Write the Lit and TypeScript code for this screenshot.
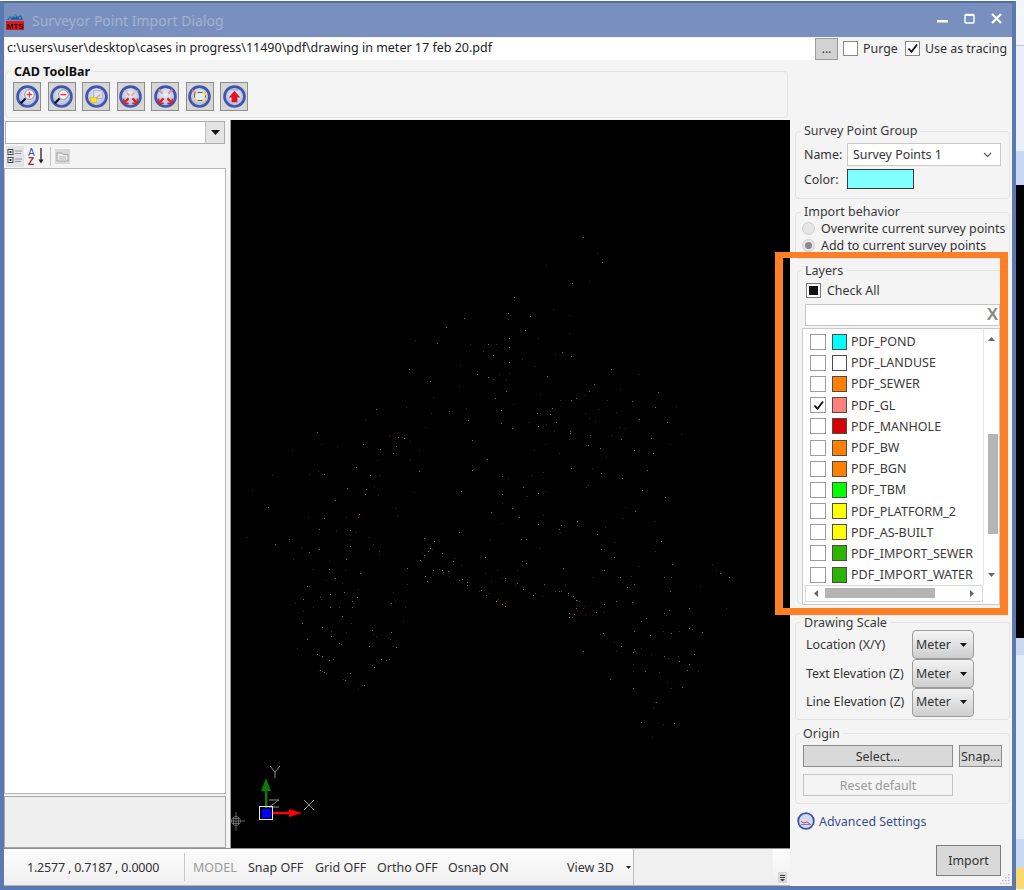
import { LitElement, html, css, svg } from "lit";
import { customElement } from "lit/decorators.js";

const D1 = "702,293 835,298 649,322 556,359 622,370 721,373 774,373 798,373 838,380 759,394 790,405 689,434 537,447 838,458 740,463 808,463 774,471 790,477 601,482 686,497 828,514 608,530 795,535 529,562 438,567 707,564 657,572 604,580 715,599 404,601 814,609 585,622 261,636 476,644 505,650 516,652 523,655 540,662 726,660 274,671 399,671 322,679 497,679 186,689 449,687 566,689 489,700 540,718 771,716 441,721 378,740 729,746 726,751 263,753 566,753 237,761 282,761 127,764 420,766 447,764 351,803 433,798 407,806 66,809 694,814 553,817 404,822 444,825 816,823";
const D2 = "316,31 494,55 114,52 502,76 782,65 234,82 282,84 348,82 388,73 383,80 385,82 816,100 268,118 319,124 361,121 378,127 686,127 50,142 178,148 415,142 582,145 361,151 612,153 779,148 135,163 428,161 359,169 212,175 266,177 417,177 601,173 606,177 594,182 447,183 237,187 577,190 636,190 447,193 582,196 188,207 348,207 675,203 766,201 298,212 569,211 574,214 670,214 694,225 532,233 247,236 298,236 346,241 609,241 626,236 636,241 638,246 654,243 800,241 391,249 766,249 585,257 657,257 316,265 287,270 590,272 686,270 697,266 782,272 710,275 335,278 232,289 532,283 712,286 385,297 343,305 489,305 752,299 747,302 300,313 773,310 769,315 271,321 380,321 274,326 220,326 803,326 367,334 494,334 798,334 196,339 484,339 825,339 816,342 250,350 300,350 327,350 367,352 526,352 825,347 220,363 335,377 519,393 215,400 364,398 277,411 303,422 425,420 348,427 484,427 428,433 303,437 438,438 231,448 481,448 327,459 332,462 417,469 489,469 497,472 202,475 261,491 268,496 277,499 292,506 298,510 308,507 454,507 467,510 476,507 425,526 433,531 263,541 271,539 277,544 282,547 287,549 359,549 338,568 346,571 354,578 401,586 383,597";
const D3 = "248,52 291,100 307,127 137,134 217,189 267,182 41,231 160,266 25,278 30,285 91,288 208,284 75,330 206,340 28,355 113,355 187,395 166,402 214,407 65,417 28,427 104,437 333,447 418,462 142,469 17,480 283,492 360,507 267,512 121,522 474,517 256,526 227,535 180,539 214,541 321,541 395,544 39,553 464,561 527,559 155,564 296,566 4,569 349,576 110,578 256,578 150,583 267,593 418,596 84,606 169,606 286,603 501,606 139,611 115,617 357,621 36,623 376,625 211,632 163,634 211,639 544,643 270,646 333,646 453,653 208,658 363,658 134,673 263,676 509,673 299,685 102,690 403,690 177,698 459,698 318,710 214,743 275,743 442,750 129,755 304,758 94,764 6,767 25,774 366,775 264,795 70,800 259,800 427,810 134,812 115,820 81,827 495,830 6,849 36,864 376,862 405,874 129,884 57,891 370,894 232,904 466,904 115,911 230,914 182,916 315,921 177,926 180,936 291,943 62,956 78,956 344,966 482,963 118,984 304,988 464,992 341,1011 65,1023 78,1030 418,1038 517,1033 637,1033 190,1045 52,1050 312,1050 647,1050 661,1058 275,1070 360,1070 392,1068 493,1070 512,1072 687,1070 6,1075 14,1073 14,1080 52,1090 46,1095 131,1093 195,1095 401,1093 600,1097 381,1100 70,1100 70,1107 166,1112 177,1112 184,1114 509,1112 104,1120 203,1120 205,1124 99,1124 126,1129 219,1129 222,1134 228,1141 238,1144 349,1144 232,1141 395,1147 232,1157 312,1152 253,1157 227,1164 248,1164 568,1164 677,1164 506,1171 232,1170 208,1180 217,1182 222,1182 256,1182 289,1177 312,1177 493,1180 499,1184 206,1190 217,1192 437,1194 424,1202 403,1232 488,1234 513,1239 538,1234 568,1224 576,1226 607,1236 299,1241 310,1239 312,1244 451,1244 341,1266 363,1278 424,1283 403,1288 405,1292 248,1293 347,1293 400,1296 453,1303 493,1308 533,1308 581,1301 503,1313 538,1323 400,1331 568,1333 400,1353 435,1353 477,1355 560,1351 594,1353 331,1376 501,1385 400,1403 512,1403 546,1401 464,1445 469,1445 459,1462 424,1507 490,1512 522,1509 456,1552";

function dotPaths(): [string, string] {
  let bright = "";
  let dim = "";
  const add = (s: string, ox: number, oy: number) => {
    s.split(" ").forEach((p, i) => {
      const [a, b] = p.split(",").map(Number);
      const x = Math.round(a / 3 + ox);
      const y = Math.round(b / 3 + oy);
      const d = `M${x} ${y}h1v1h-1z`;
      if (i % 2 === 0) bright += d;
      else dim += d;
    });
  };
  add(D1, 230, 220);
  add(D2, 230, 490);
  add(D3, 500, 220);
  return [bright, dim];
}
const [BRIGHT, DIM] = dotPaths();

const ring = (inner: unknown) => html`<svg width="23" height="23" viewBox="0 0 24 24">
  <defs><radialGradient id="rg" cx="50%" cy="40%" r="60%"><stop offset="0" stop-color="#eef0f9"/><stop offset="1" stop-color="#aab6de"/></radialGradient></defs>
  <circle cx="12" cy="12" r="10.4" fill="url(#rg)" stroke="#4257ac" stroke-width="2.800"/>
  ${inner}
</svg>`;

const ICONS = [
  svg`<circle cx="14" cy="10" r="5" fill="#fff" stroke="#8a8a8a"/><path d="M11 10h6M14 7v6" stroke="#e8414a" stroke-width="1.6"/><path d="M10 14l-5 5" stroke="#111" stroke-width="2.2"/>`,
  svg`<circle cx="14" cy="10" r="5" fill="#fff" stroke="#8a8a8a"/><path d="M11 10h6" stroke="#e8414a" stroke-width="1.8"/><path d="M10 14l-5 5" stroke="#111" stroke-width="2.2"/>`,
  svg`<rect x="9" y="6" width="9" height="8" fill="#dfe3ee" stroke="#a5adc8"/><path d="M10 15l6-5" stroke="#e89a30" stroke-width="1.2"/><rect x="6" y="13" width="6" height="5" fill="#ffe21a" stroke="#d7b400" stroke-width=".5"/>`,
  svg`<path d="M8 8l3 3M16 8l-3 3" stroke="#e9a09a" stroke-width="1.8"/><path d="M5 6h4M16 6h4" stroke="#e9a09a" stroke-width="1.2"/><path d="M6 18l4-4M18 18l-4-4" stroke="#d8201c" stroke-width="2.4"/><path d="M5 14v5h5M19 14v5h-5" fill="none" stroke="#d8201c" stroke-width="1.4"/>`,
  svg`<path d="M9 9l-4-4M15 9l4-4" stroke="#e58f88" stroke-width="2"/><path d="M6 18l4-4M18 18l-4-4" stroke="#d8201c" stroke-width="2.4"/><path d="M5 14v5h5M19 14v5h-5" fill="none" stroke="#d8201c" stroke-width="1.4"/>`,
  svg`<rect x="7" y="8" width="11" height="8" fill="#e9ecf6" stroke="#333" stroke-width=".8"/><path d="M7 8h3M15 8h3M7 16h3M15 16h3M18 8v3M18 13v3M7 13v3" stroke="#ffe21a" stroke-width="1.6"/><path d="M4 5l4 3" stroke="#e77" stroke-width="1.2"/>`,
  svg`<path d="M8 5h8" stroke="#9aa0ba" stroke-width="1"/><path d="M12 6l6 7h-3v5H9v-5H6z" fill="#e2141c"/>`,
];

const LAYERS: [string, string, boolean][] = [
  ["PDF_POND", "#00ffff", false],
  ["PDF_LANDUSE", "#ffffff", false],
  ["PDF_SEWER", "#ff7f00", false],
  ["PDF_GL", "#ff7f7f", true],
  ["PDF_MANHOLE", "#d60000", false],
  ["PDF_BW", "#ff7f00", false],
  ["PDF_BGN", "#ff7f00", false],
  ["PDF_TBM", "#00ff00", false],
  ["PDF_PLATFORM_2", "#ffff00", false],
  ["PDF_AS-BUILT", "#ffff00", false],
  ["PDF_IMPORT_SEWER", "#2db300", false],
  ["PDF_IMPORT_WATER", "#2db300", false],
];

const check = html`<svg width="13" height="13" viewBox="0 0 13 13"><path d="M2.500 6.500l3 3.400L11 2.500" fill="none" stroke="#111" stroke-width="1.800"/></svg>`;
const tri = html`<svg width="9" height="5" viewBox="0 0 9 5"><path d="M0 0h9L4.500 5z" fill="#111"/></svg>`;
const triSmall = html`<svg width="7" height="4" viewBox="0 0 7 4"><path d="M0 0h7L3.500 4z" fill="#111"/></svg>`;

@customElement("app-root")
export class AppRoot extends LitElement {
  static styles = css`
    :host {
      display: flex;
      position: relative;
      width: 1024px;
      height: 890px;
      overflow: hidden;
      background: #fff;
      font-family: "Noto Sans", "Open Sans", sans-serif;
      font-size: 12.4px;
      color: #333;
    }
    .window {
      box-sizing: border-box;
      width: 1016px;
      height: 889px;
      margin-top: 1px;
      display: flex;
      flex-direction: column;
      border-top: 2px solid #4f6ea8;
      border-left: 4px solid #5b79b0;
      border-right: 4px solid #5b79b0;
      border-bottom: 4px solid #5b79b0;
      background: #f4f4f4;
    }
    .side { flex: 1; display: flex; flex-direction: column; }
    .side div { flex: none; }
    .s1 { height: 45px; background: #f3f6fb; border-bottom: 1px solid #c4c8d0; }
    .s2 { height: 105px; background: #eaf0fa; }
    .s3 { height: 34px; background: #c5d7f3; }
    .s4 { height: 453px; background: #000; }
    .s5 { height: 17px; background: #cbd9ee; }
    .s6 { height: 184px; background: #e4ecf9; }
    .s7 { height: 29px; background: #c9d9ef; }
    .s8 { height: 21px; background: #fbd96b; }
    .title {
      flex: none;
      height: 34px;
      background: #7990bf;
      display: flex;
      align-items: center;
      color: #a0b1d4;
      font-size: 14px;
      padding-left: 2px;
    }
    .title .logo { margin-right: 8px; margin-top: 2px; }
    .title .label { flex: 1; }
    .winbtns { display: flex; align-items: center; margin: 0 10px 3px 0; gap: 16px; }
    .pathrow {
      flex: none;
      height: 25px;
      display: flex;
      align-items: flex-start;
      padding: 1px 0 0 1px;
      box-sizing: border-box;
    }
    .path {
      box-sizing: border-box;
      width: 810px;
      height: 22px;
      background: #fff;
      padding-left: 2px;
      line-height: 19px;
      font-size: 12.5px;
      color: #222;
    }
    .dots {
      box-sizing: border-box;
      width: 23px;
      height: 22px;
      background: #d2d2d2;
      border: 1px solid #9a9a9a;
      text-align: center;
      line-height: 20px;
      font-size: 12px;
    }
    .opt { display: flex; align-items: center; height: 20px; }
    .opt.purge { margin-left: 5px; width: 62px; }
    .cb {
      box-sizing: border-box;
      flex: none;
      width: 15px;
      height: 15px;
      background: #fff;
      border: 1px solid #8a8a8a;
      display: flex;
      align-items: center;
      justify-content: center;
    }
    .opt .cb { margin-right: 5px; }
    .main { flex: 1; display: flex; min-height: 0; }
    .leftcol { flex: none; width: 786px; display: flex; flex-direction: column; }
    .rightcol {
      flex: none;
      width: 222px;
      box-sizing: border-box;
      padding: 61px 0 0 5px;
      display: flex;
      flex-direction: column;
    }
    fieldset {
      box-sizing: border-box;
      margin: 0;
      min-width: 0;
      border: 1px solid #e3e3e3;
      border-radius: 4px;
      padding: 0;
    }
    legend {
      padding: 0 3px;
      margin-left: 0;
      line-height: 16px;
      height: 16px;
      font-size: 12.5px;
      color: #3a3a3a;
    }
    .toolbar {
      flex: none;
      margin: 1px 0 0 1px;
      width: 783px;
      height: 55px;
      padding: 3px 0 0 7px;
    }
    .toolbar legend { font-weight: 700; color: #111; margin-left: -2px; line-height: 18px; }
    .tools { display: flex; gap: 6.5px; }
    .tool {
      box-sizing: border-box;
      width: 28px;
      height: 29px;
      background: #d6d6d6;
      border: 1px solid #8e8e8e;
      display: flex;
      align-items: center;
      justify-content: center;
    }
    .body { flex: 1; display: flex; min-height: 0; margin-top: 2px; }
    .props { flex: none; width: 222px; display: flex; flex-direction: column; padding-top: 1px; box-sizing: border-box; }
    .combo {
      flex: none;
      box-sizing: border-box;
      height: 23px;
      margin-left: 1px;
      width: 220px;
      background: #fff;
      border: 1px solid #aeaeae;
      display: flex;
      justify-content: flex-end;
    }
    .combo .arr {
      width: 18px;
      background: #e4e4e4;
      border-left: 1px solid #bdbdbd;
      display: flex;
      align-items: center;
      justify-content: center;
    }
    .strip { flex: none; height: 24px; display: flex; align-items: center; padding-left: 2px; }
    .stripbtn { display: flex; align-items: center; justify-content: center; }
    .stripbtn.on { background: #e3e3e3; width: 18px; height: 21px; }
    .stripbtn.sort { margin-left: 4px; }
    .stripsep { width: 1px; height: 19px; background: #c4c4c4; margin: 0 4px; }
    .plist { flex: 1; background: #fff; border: 1px solid #b5b5b5; box-sizing: border-box; }
    .pdesc {
      flex: none;
      height: 52px;
      margin-top: 2px;
      box-sizing: border-box;
      background: #efefef;
      border: 1px solid #a8a8a8;
    }
    .canvas { flex: none; width: 560px; margin-left: 4px; background: #000; border-left: 1px solid #999; box-sizing: border-box; }
    .canvas svg { display: block; }
    .status {
      flex: none;
      height: 38px;
      box-sizing: border-box;
      border-top: 1px solid #8f8f8f;
      border-bottom: 1px solid #b4b4b4;
      background: linear-gradient(#fcfcfc, #f0f0f0);
      display: flex;
      align-items: center;
      font-size: 12.5px;
      color: #333;
    }
    .status span { flex: none; white-space: nowrap; }
    .coords { width: 157px; padding-left: 23px; letter-spacing: -0.2px; }
    .vsep { width: 1px; height: 28px; background: #c8c8c8; flex: none; margin-right: 8px; }
    .st.model { width: 55px; color: #9a9a9a; }
    .st.snap { width: 67px; }
    .st.grid { width: 62px; }
    .st.ortho { width: 71px; }
    .st.osnap { width: 119px; }
    .st.view { width: 59px; }
    .starr { flex: none; }
    .stpanel { flex: none; align-self: stretch; width: 140px; margin-left: 2px; background: #f0f0f0; border-left: 1px solid #bbb; box-sizing: border-box; }
    .grip { flex: 1; align-self: stretch; display: flex; align-items: flex-end; justify-content: flex-end; padding: 0 3px 2px 0; }
    .g1 { width: 215px; height: 76px; padding: 4px 0 0 8px; }
    .g1 legend { margin-left: -3px; }
    .frow { display: flex; align-items: center; }
    .frow.gap { margin-top: 3px; }
    .nm { width: 43px; }
    .sel {
      box-sizing: border-box;
      width: 154px;
      height: 23px;
      background: #fff;
      border: 1px solid #c9c9c9;
      display: flex;
      align-items: center;
      justify-content: space-between;
      padding: 0 8px 0 5px;
    }
    .swatch {
      box-sizing: border-box;
      width: 67px;
      height: 20px;
      background: #80ffff;
      border: 1px solid #3c3c3c;
    }
    .g2 { width: 215px; height: 55px; margin-top: 5px; padding: 0 0 0 6px; }
    .g2 legend { margin-left: -1px; }
    .radio { display: flex; align-items: center; height: 17px; }
    .rd {
      box-sizing: border-box;
      width: 13px;
      height: 13px;
      border-radius: 50%;
      background: #e6e6e6;
      border: 1px solid #cfcfcf;
      margin-right: 6px;
      display: flex;
      align-items: center;
      justify-content: center;
    }
    .rd i { width: 7px; height: 7px; border-radius: 50%; background: #8a8a8a; }
    .g3 { margin: 3px 0 0 2px; width: 208px; height: 342px; padding: 0 0 0 4px; }
    .g3 legend { line-height: 18px; }
    .checkall { display: flex; align-items: center; height: 20px; margin: 2px 0 0 4px; }
    .checkall .cb { border-color: #777; margin-right: 6px; }
    .checkall .cb i { width: 9px; height: 9px; background: #111; }
    .search {
      box-sizing: border-box;
      margin: 4px 0 2px 3px;
      width: 195px;
      height: 22px;
      background: #fff;
      border: 1px solid #c6c6c6;
      display: flex;
      justify-content: flex-end;
      align-items: center;
      padding-right: 1px;
      font-family: "Liberation Sans", sans-serif;
      font-weight: 700;
      font-size: 17px;
      color: #8a8a8a;
    }
    .list {
      box-sizing: border-box;
      width: 198px;
      height: 277px;
      background: #fff;
      border: 1px solid #c9c9c9;
      display: grid;
      grid-template-columns: 180px 16px;
      grid-template-rows: 256px 1fr;
    }
    .rows { overflow: hidden; padding-top: 2px; }
    .lrow { display: flex; align-items: center; height: 21.2px; padding-left: 7px; font-size: 12.5px; white-space: nowrap; color: #3a3a3a; }
    .lrow .cb { width: 16px; height: 16px; border-color: #9c9c9c; margin-right: 6px; }
    .lrow .sw { box-sizing: border-box; width: 15px; height: 16px; border: 1px solid #4d4d4d; margin-right: 4px; flex: none; }
    .vs { position: relative; display: flex; flex-direction: column; align-items: center; justify-content: space-between; padding: 8px 0; box-sizing: border-box; border-left: 1px solid #e8e8e8; }
    .vs .thumb { position: absolute; left: 4px; top: 105px; width: 10px; height: 100px; background: #b5b5b5; }
    .hs {
      margin: 0 0 2px 2px;
      border: 1px solid #d8d8d8;
      display: flex;
      align-items: center;
      justify-content: space-between;
      padding: 0 8px 0 8px;
      position: relative;
    }
    .hs .thumb { position: absolute; left: 19px; top: 2px; width: 110px; height: 10px; background: #b5b5b5; }
    .g4 { width: 215px; height: 106px; margin-top: 10px; padding: 0 0 0 10px; }
    .g4 legend { margin-left: -5px; line-height: 18px; }
    .scale { display: flex; align-items: center; height: 28.7px; line-height: 20px; padding-top: 1px; box-sizing: border-box; }
    .scale .lb { width: 106px; white-space: nowrap; }
    .mbtn {
      box-sizing: border-box;
      width: 62px;
      height: 29px;
      border: 1px solid #9c9c9c;
      border-radius: 4px;
      background: linear-gradient(#f4f4f4, #cecece);
      display: flex;
      align-items: center;
      justify-content: space-between;
      padding: 0 6px 0 3px;
      color: #333;
    }
    .g5 { width: 215px; height: 79px; margin-top: 5px; padding: 4px 0 0 7px; }
    .g5 legend { margin-left: -3px; line-height: 18px; }
    .obtn {
      box-sizing: border-box;
      height: 22px;
      background: #d9d9d9;
      border: 1px solid #8c8c8c;
      display: flex;
      align-items: center;
      justify-content: center;
      color: #333;
    }
    .obtn.sel1 { width: 150px; }
    .obtn.snap { width: 43px; margin-left: 6px; }
    .obtn.reset { width: 150px; margin-top: 7px; background: #f4f4f4; border-color: #c4c4c4; color: #9a9a9a; }
    .adv { display: flex; align-items: center; margin: 8px 0 0 2px; height: 18px; color: #3a4c92; }
    .adv svg { margin-right: 4px; }
    .imp {
      box-sizing: border-box;
      align-self: flex-start;
      margin: 15px 0 0 141px;
      width: 65px;
      height: 31px;
      background: #d9d9d9;
      border: 1px solid #7c7c7c;
      display: flex;
      align-items: center;
      justify-content: center;
      color: #333;
    }
    .corner { position: absolute; left: 1000px; top: 874px; }
    .highlight {
      position: absolute;
      left: 775px;
      top: 252px;
      box-sizing: border-box;
      width: 233px;
      height: 363px;
      border-style: solid;
      border-color: #ff7f27;
      border-width: 6px 8px 7px 8px;
      pointer-events: none;
    }
  `;

  render() {
    return html`
      <div class="window">
        <div class="title">
          <svg class="logo" width="18" height="18" viewBox="0 0 18 18">
            <path d="M1 8l3-4 2 2 3-4 3 3 3-2 2 5z" fill="#2a5db0"/>
            <path d="M3 6h2v2H3zM8 3h2v2H8zM13 5h2v2h-2z" fill="#2fb36a"/>
            <rect x="0" y="9" width="18" height="9" fill="#e0141c"/>
            <text x="9" y="16.500" text-anchor="middle" font-size="8" font-weight="700" fill="#1a1a1a" font-family="Liberation Sans">MTS</text>
          </svg>
          <div class="label">Surveyor Point Import Dialog</div>
          <div class="winbtns">
            <svg width="11" height="11" viewBox="0 0 11 11"><rect x="0" y="7" width="11" height="2.500" fill="#fff"/></svg>
            <svg width="11" height="11" viewBox="0 0 11 11"><rect x="1" y="1.500" width="9" height="8.500" rx="1" fill="none" stroke="#fff" stroke-width="1.400"/><rect x="1" y="1" width="9" height="2" fill="#fff"/></svg>
            <svg width="11" height="11" viewBox="0 0 11 11"><path d="M1 1l9 9M10 1l-9 9" stroke="#fff" stroke-width="2.200"/></svg>
          </div>
        </div>
        <div class="pathrow">
          <div class="path">c:\\users\\user\\desktop\\cases in progress\\11490\\pdf\\drawing in meter 17 feb 20.pdf</div>
          <div class="dots">...</div>
          <div class="opt purge"><div class="cb"></div>Purge</div>
          <div class="opt"><div class="cb">${check}</div>Use as tracing</div>
        </div>
        <div class="main">
          <div class="leftcol">
            <fieldset class="toolbar">
              <legend>CAD ToolBar</legend>
              <div class="tools">
                ${ICONS.map((i) => html`<div class="tool">${ring(i)}</div>`)}
              </div>
            </fieldset>
            <div class="body">
              <div class="props">
                <div class="combo"><div class="arr">${tri}</div></div>
                <div class="strip">
                  <div class="stripbtn on">
                    <svg width="16" height="16" viewBox="0 0 16 16"><rect x="1" y="1.500" width="5" height="5" fill="#fff" stroke="#445"/><rect x="1" y="9.500" width="5" height="5" fill="#fff" stroke="#445"/><rect x="2.500" y="3" width="2" height="2" fill="#333"/><rect x="2.500" y="11" width="2" height="2" fill="#333"/><path d="M8 3h7M8 5.500h6M8 11h7M8 13.500h6" stroke="#8a94b8"/></svg>
                  </div>
                  <div class="stripbtn sort">
                    <svg width="18" height="18" viewBox="0 0 18 18"><text x="0" y="8.500" font-size="10" fill="#3a55a8" font-family="Liberation Sans">A</text><text x="0" y="17.500" font-size="10" font-weight="700" fill="#a02c2c" font-family="Liberation Sans">Z</text><path d="M13 1v14" stroke="#222" stroke-width="1.300"/><path d="M10.500 12.500h5L13 16.500z" fill="#222"/></svg>
                  </div>
                  <div class="stripsep"></div>
                  <div class="stripbtn">
                    <svg width="15" height="15" viewBox="0 0 15 15"><rect x="0" y="0" width="15" height="15" fill="#d8d8d8"/><path d="M2 4h5l1 1.500h5V12H2z" fill="#ececec" stroke="#a5a5a5"/><path d="M4 8h7M4 10h7" stroke="#b8b8b8"/></svg>
                  </div>
                </div>
                <div class="plist"></div>
                <div class="pdesc"></div>
              </div>
              <div class="canvas">
                <svg width="559" height="728" viewBox="231 120 559 728">
                  <path d=${DIM} fill="#5e2521"/>
                  <path d=${BRIGHT} fill="#b84f41"/>
                  <g stroke="#8f8f8f" fill="none" stroke-width="1">
                    <path d="M270 766l5 6 5-6M275 772v6"/>
                    <path d="M304 800l10 10M314 800l-10 10"/>
                    <path d="M269 800h10l-10 7h10"/>
                  </g>
                  <g stroke="#8a8a8a" fill="none" stroke-width=".7">
                    <circle cx="236" cy="821" r="4.500"/>
                    <path d="M231 821h14M236 812v19"/>
                    <path d="M232.500 818.500h7M232.500 823.500h7M233.500 817.500v7M238.500 817.500v7"/>
                  </g>
                  <path d="M265 808v-18h2.400v18z" fill="#0a7a0a"/>
                  <path d="M261 791l5-13 5 13z" fill="#0a7a0a"/>
                  <path d="M272 811.800h18v2.400h-18z" fill="#ff0000"/>
                  <path d="M289 809l13 4-13 4z" fill="#ff0000"/>
                  <rect x="259.500" y="806.500" width="13" height="13" fill="none" stroke="#e6e6e6"/>
                  <rect x="262" y="809" width="9" height="9" fill="#0000ff"/>
                </svg>
              </div>
            </div>
            <div class="status">
              <span class="coords">1.2577 , 0.7187 , 0.0000</span>
              <div class="vsep"></div>
              <span class="st model">MODEL</span>
              <span class="st snap">Snap OFF</span>
              <span class="st grid">Grid OFF</span>
              <span class="st ortho">Ortho OFF</span>
              <span class="st osnap">Osnap ON</span>
              <span class="st view">View 3D</span>
              <svg class="starr" width="5" height="3" viewBox="0 0 5 3"><path d="M0 0h5L2.500 3z" fill="#222"/></svg>
              <div class="stpanel"></div>
              <div class="grip">
                <svg width="9" height="11" viewBox="0 0 9 11"><rect width="9" height="11" fill="#d8d8d8"/><path d="M2 3h5v1H2zM2 5h5v1H2z" fill="#444"/><path d="M2 7h5L4.500 9.500z" fill="#444"/></svg>
              </div>
            </div>
          </div>
          <div class="rightcol">
            <fieldset class="g1">
              <legend>Survey Point Group</legend>
              <div class="frow"><div class="nm">Name:</div><div class="sel">Survey Points 1
                <svg width="9" height="6" viewBox="0 0 9 6"><path d="M1 1l3.500 3.500L8 1" fill="none" stroke="#555" stroke-width="1.100"/></svg></div></div>
              <div class="frow gap"><div class="nm">Color:</div><div class="swatch"></div></div>
            </fieldset>
            <fieldset class="g2">
              <legend>Import behavior</legend>
              <div class="radio"><div class="rd"></div>Overwrite current survey points</div>
              <div class="radio"><div class="rd"><i></i></div>Add to current survey points</div>
            </fieldset>
            <fieldset class="g3">
              <legend>Layers</legend>
              <div class="checkall"><div class="cb"><i></i></div>Check All</div>
              <div class="search">X</div>
              <div class="list">
                <div class="rows">
                  ${LAYERS.map(
                    ([n, c, on]) => html`<div class="lrow">
                      <div class="cb">${on ? check : ""}</div>
                      <div class="sw" style="background:${c}"></div>${n}
                    </div>`
                  )}
                </div>
                <div class="vs">
                  <svg width="7" height="4" viewBox="0 0 7 4"><path d="M0 4h7L3.500 0z" fill="#666"/></svg>
                  <div class="thumb"></div>
                  <svg width="7" height="4" viewBox="0 0 7 4"><path d="M0 0h7L3.500 4z" fill="#666"/></svg>
                </div>
                <div class="hs">
                  <svg width="4" height="7" viewBox="0 0 4 7"><path d="M4 0v7L0 3.500z" fill="#666"/></svg>
                  <div class="thumb"></div>
                  <svg width="4" height="7" viewBox="0 0 4 7"><path d="M0 0v7l4-3.500z" fill="#666"/></svg>
                </div>
              </div>
            </fieldset>
            <fieldset class="g4">
              <legend>Drawing Scale</legend>
              ${["Location (X/Y)", "Text Elevation (Z)", "Line Elevation (Z)"].map(
                (l) => html`<div class="scale"><div class="lb">${l}</div><div class="mbtn">Meter ${triSmall}</div></div>`
              )}
            </fieldset>
            <fieldset class="g5">
              <legend>Origin</legend>
              <div class="frow"><div class="obtn sel1">Select...</div><div class="obtn snap">Snap...</div></div>
              <div class="obtn reset">Reset default</div>
            </fieldset>
            <div class="adv">
              <svg width="18" height="18" viewBox="0 0 18 18"><circle cx="9" cy="9" r="7.800" fill="#d5daee" stroke="#3e52a6" stroke-width="1.800"/><path d="M4 9.500l3 1.500 3-1 3 2" fill="none" stroke="#c05050"/><path d="M4 12.500h10" stroke="#7080b8"/></svg>
              Advanced Settings
            </div>
            <div class="imp">Import</div>
          </div>
        </div>
      </div>
      <div class="side">
        <div class="s1"></div><div class="s2"></div><div class="s3"></div><div class="s4"></div>
        <div class="s5"></div><div class="s6"></div><div class="s7"></div><div class="s8"></div>
      </div>
      <div class="highlight"></div>
      <svg class="corner" width="10" height="10" viewBox="0 0 10 10"><path d="M8 0h1.500v1.500H8zM5 3h1.500v1.500H5zM8 3h1.500v1.500H8zM2 6h1.500v1.500H2zM5 6h1.500v1.500H5zM8 6h1.500v1.500H8zM0 9h1.500v1H0zM3 9h1.500v1H3zM6 9h1.500v1H6zM8 9h1.500v1H8z" fill="#b9c0cc"/></svg>
    `;
  }
}
